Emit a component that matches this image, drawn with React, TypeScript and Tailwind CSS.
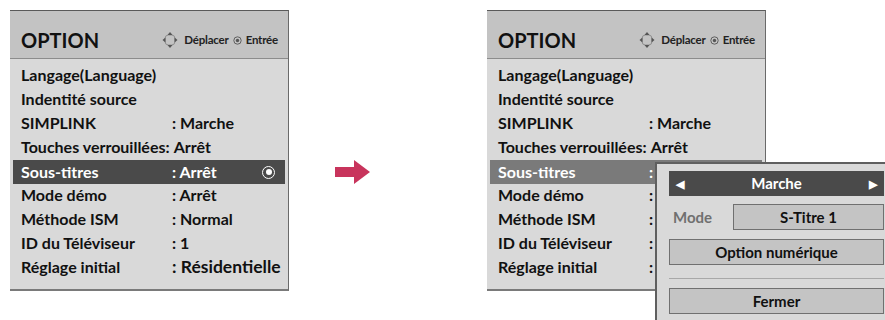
import React from "react";

const font = { fontFamily: "Lato, 'Noto Sans', sans-serif" };

function NavIcon() {
  return (
    <svg width="16" height="18" viewBox="0 0 16 18" className="shrink-0">
      <rect x="3" y="4" width="10" height="10" rx="3.5" fill="none" stroke="#8a8a8a" strokeWidth="0.9" />
      <polygon points="8,1 10.5,4 5.5,4" fill="#555" />
      <polygon points="8,17 10.5,14 5.5,14" fill="#555" />
      <polygon points="0.5,9 3.5,6.5 3.5,11.5" fill="#555" />
      <polygon points="15.5,9 12.5,6.5 12.5,11.5" fill="#555" />
    </svg>
  );
}

function EnterIcon() {
  return (
    <svg width="9" height="9" viewBox="0 0 9 9" className="shrink-0">
      <circle cx="4.5" cy="4.5" r="3.7" fill="none" stroke="#555" strokeWidth="0.9" />
      <circle cx="4.5" cy="4.5" r="1.7" fill="#555" />
    </svg>
  );
}

type Row = { label: string; value?: string; big?: boolean };

const rows: Row[] = [
  { label: "Langage(Language)" },
  { label: "Indentité source" },
  { label: "SIMPLINK", value: ": Marche" },
  { label: "Touches verrouillées:", value: "Arrêt" },
  { label: "Sous-titres", value: ": Arrêt" },
  { label: "Mode démo", value: ": Arrêt" },
  { label: "Méthode ISM", value: ": Normal" },
  { label: "ID du Téléviseur", value: ": 1" },
  { label: "Réglage initial", value: ": Résidentielle", big: true },
];

function Panel({ variant }: { variant: "left" | "right" }) {
  return (
    <div className="w-[279px] h-[281px] flex flex-col bg-[#d9d9d9] border-t border-t-[#5a5a5a] border-r border-r-[#6a6a6a] border-b-2 border-b-[#7a7a7a] shrink-0">
      <div className="h-[48px] bg-[#c3c3c3] border-b border-b-[#8c8c8c] flex items-end pb-[8px] pl-[11px] pr-[10px]">
        <div className="text-[20px] font-bold text-[#111] leading-none">OPTION</div>
        <div className="ml-auto flex items-center gap-[4px] text-[11.5px] font-bold text-[#222] leading-none pb-[1px]">
          <NavIcon />
          <span className="tracking-[-0.2px] ml-[2px]">Déplacer</span>
          <EnterIcon />
          <span className="tracking-[-0.2px]">Entrée</span>
        </div>
      </div>
      <div className="flex flex-col pt-[4px]">
        {rows.map((r, i) => {
          const hl = i === 4;
          const hlBg = variant === "left" ? "bg-[#4a4a4a]" : "bg-[#7a7a7a]";
          const inline = r.label.endsWith(":");
          const value = variant === "right" && i >= 4 ? ":" : r.value;
          return (
            <div
              key={i}
              className={
                "h-[24px] flex items-center text-[16px] font-bold leading-none " +
                (hl ? hlBg + " text-white mx-[3px] pl-[8px] pr-[8px] mt-[1px] -mb-[1px]" : "text-[#111] pl-[11px] pr-[3px]")
              }
            >
              <span className={"whitespace-nowrap " + (r.value && inline ? "" : "w-[151px] shrink-0")}>
                {r.label}
              </span>
              {r.value && (
                <span className={"whitespace-nowrap " + (r.big && variant === "left" ? "text-[17.5px]" : "") + (inline ? " ml-[4px]" : "")}>
                  {value}
                </span>
              )}
              {hl && variant === "left" && (
                <span className="ml-auto mr-[2px] w-[13px] h-[13px] rounded-full border-[1.5px] border-white flex items-center justify-center">
                  <span className="w-[6px] h-[6px] rounded-full bg-white" />
                </span>
              )}
            </div>
          );
        })}
      </div>
    </div>
  );
}

function Arrow() {
  return (
    <svg width="36" height="24" viewBox="0 0 36 24">
      <polygon points="0,7 19,7 19,0 35,12 19,24 19,17 0,17" fill="#c8345c" />
    </svg>
  );
}

function Popup() {
  return (
    <div className="absolute left-[655px] top-[162px] w-[240px] h-[170px] bg-[#d9d9d9] border-l-2 border-t-2 border-[#5f5f5f] pl-[12px] pt-[7px] flex flex-col text-[15px] font-bold leading-none">
      <div className="w-[215px] h-[25px] bg-[#4a4a4a] text-white flex items-center px-[7px]">
        <span className="text-[11px]">◀</span>
        <span className="flex-1 text-center">Marche</span>
        <span className="text-[11px]">▶</span>
      </div>
      <div className="flex items-center mt-[8px]">
        <span className="text-[#707070] w-[64px] pl-[4px]">Mode</span>
        <div className="w-[151px] h-[26px] bg-[#c4c4c4] border border-[#707070] flex items-center justify-center text-[#111]">
          S-Titre 1
        </div>
      </div>
      <div className="w-[215px] h-[26px] mt-[9px] bg-[#c4c4c4] border border-[#707070] flex items-center justify-center text-[#111]">
        Option numérique
      </div>
      <div className="w-[215px] h-px bg-[#a8a8a8] mt-[13px]" />
      <div className="w-[215px] h-[26px] mt-[9px] bg-[#c4c4c4] border border-[#707070] flex items-center justify-center text-[#111]">
        Fermer
      </div>
    </div>
  );
}

export default function App() {
  return (
    <div className="relative w-[885px] h-[320px] bg-white overflow-hidden" style={font}>
      <div className="flex items-start pt-[10px] pl-[10px]">
        <Panel variant="left" />
        <div className="mt-[150px] ml-[46px]">
          <Arrow />
        </div>
        <div className="ml-[116px]">
          <Panel variant="right" />
        </div>
      </div>
      <Popup />
    </div>
  );
}
